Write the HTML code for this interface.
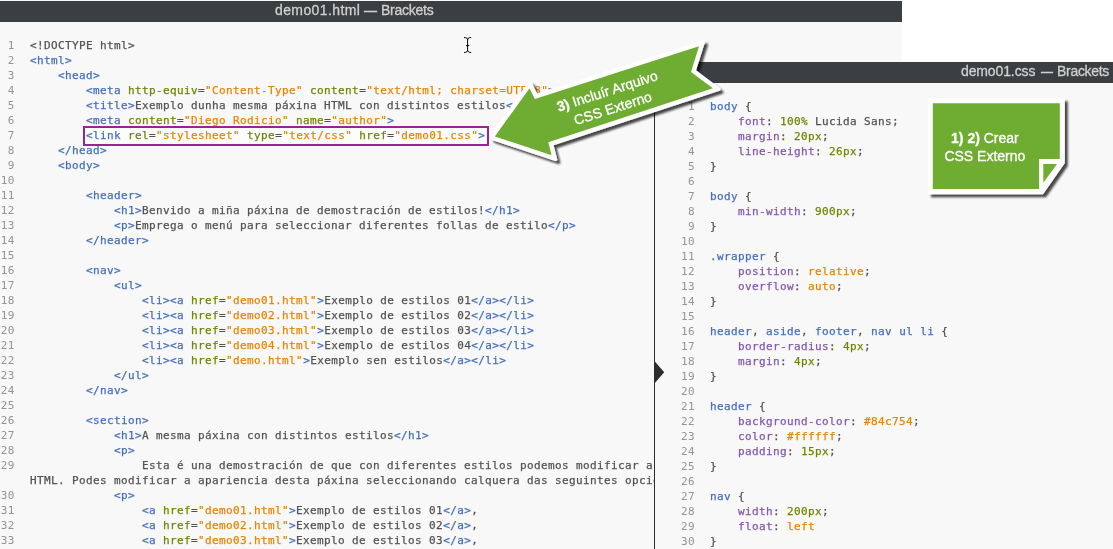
<!DOCTYPE html>
<html lang="gl">
<head>
<meta charset="utf-8">
<title>demo01.html — Brackets</title>
<style>
html,body{margin:0;padding:0;}
body{width:1113px;height:549px;position:relative;overflow:hidden;background:#fff;font-family:"Liberation Sans",sans-serif;}
.win{position:absolute;background:#f8f8f8;overflow:hidden;}
.tb{-webkit-text-stroke:0.3px #d0d0d0;position:absolute;left:0;right:0;background:#3c3f41;color:#d0d0d0;font-family:"Liberation Sans",sans-serif;font-size:14px;white-space:nowrap;}
.code{position:absolute;will-change:transform;-webkit-text-stroke:0.25px;font-family:"DejaVu Sans Mono","Liberation Mono",monospace;font-size:11px;letter-spacing:0.3775px;line-height:15px;color:#535353;}
.ln{height:15px;position:relative;white-space:pre;}
.ln i{-webkit-text-stroke:0;position:absolute;font-style:normal;color:#949494;text-align:right;width:30px;}
#left{left:0;top:0;width:902px;height:549px;}
#left .tb{top:1px;height:21px;}
#left .code{left:29.6px;top:38px;}
#left .ln i{left:-45.3px;}
#right{left:654px;top:62px;width:459px;height:487px;}
#right .tb{top:0;height:21px;}
#right .code{left:56px;top:37px;}
#right .ln i{left:-45px;}
#vline{position:absolute;left:654.1px;top:83px;width:1.15px;height:466px;background:#2b2d2f;}
#box{position:absolute;left:82.9px;top:125.6px;width:401.8px;height:16.8px;border:2px solid #9a2196;background:rgba(255,255,255,.55);box-shadow:0 0 0 1px rgba(255,255,255,.7);}
.t{position:absolute;will-change:transform;}
</style>
</head>
<body>
<div class="win" id="left">
  <div id="box"></div>
  <div class="tb"><span class="t" style="left:275.1px;top:1px;letter-spacing:0.4px;">demo01.html</span><span class="t" style="left:364.4px;top:1px;transform:scaleX(0.93);transform-origin:0 0;">—</span><span class="t" style="left:380.5px;top:1px;letter-spacing:-0.26px;">Brackets</span></div>
  <div class="code">
<div class="ln"><i>1</i>&lt;!DOCTYPE html&gt;</div>
<div class="ln"><i>2</i><span style="color:#446fbd">&lt;html</span><span style="color:#446fbd">&gt;</span></div>
<div class="ln"><i>3</i>    <span style="color:#446fbd">&lt;head</span><span style="color:#446fbd">&gt;</span></div>
<div class="ln"><i>4</i>        <span style="color:#446fbd">&lt;meta</span> <span style="color:#6d8600">http-equiv</span>=<span style="color:#e88501">"Content-Type"</span> <span style="color:#6d8600">content</span>=<span style="color:#e88501">"text/html; charset=UTF-8"</span><span style="color:#446fbd">&gt;</span></div>
<div class="ln"><i>5</i>        <span style="color:#446fbd">&lt;title</span><span style="color:#446fbd">&gt;</span>Exemplo dunha mesma páxina HTML con distintos estilos<span style="color:#446fbd">&lt;/title</span><span style="color:#446fbd">&gt;</span></div>
<div class="ln"><i>6</i>        <span style="color:#446fbd">&lt;meta</span> <span style="color:#6d8600">content</span>=<span style="color:#e88501">"Diego Rodicio"</span> <span style="color:#6d8600">name</span>=<span style="color:#e88501">"author"</span><span style="color:#446fbd">&gt;</span></div>
<div class="ln"><i>7</i>        <span style="color:#446fbd">&lt;link</span> <span style="color:#6d8600">rel</span>=<span style="color:#e88501">"stylesheet"</span> <span style="color:#6d8600">type</span>=<span style="color:#e88501">"text/css"</span> <span style="color:#6d8600">href</span>=<span style="color:#e88501">"demo01.css"</span><span style="color:#446fbd">&gt;</span></div>
<div class="ln"><i>8</i>    <span style="color:#446fbd">&lt;/head</span><span style="color:#446fbd">&gt;</span></div>
<div class="ln"><i>9</i>    <span style="color:#446fbd">&lt;body</span><span style="color:#446fbd">&gt;</span></div>
<div class="ln"><i>10</i></div>
<div class="ln"><i>11</i>        <span style="color:#446fbd">&lt;header</span><span style="color:#446fbd">&gt;</span></div>
<div class="ln"><i>12</i>            <span style="color:#446fbd">&lt;h1</span><span style="color:#446fbd">&gt;</span>Benvido a miña páxina de demostración de estilos!<span style="color:#446fbd">&lt;/h1</span><span style="color:#446fbd">&gt;</span></div>
<div class="ln"><i>13</i>            <span style="color:#446fbd">&lt;p</span><span style="color:#446fbd">&gt;</span>Emprega o menú para seleccionar diferentes follas de estilo<span style="color:#446fbd">&lt;/p</span><span style="color:#446fbd">&gt;</span></div>
<div class="ln"><i>14</i>        <span style="color:#446fbd">&lt;/header</span><span style="color:#446fbd">&gt;</span></div>
<div class="ln"><i>15</i></div>
<div class="ln"><i>16</i>        <span style="color:#446fbd">&lt;nav</span><span style="color:#446fbd">&gt;</span></div>
<div class="ln"><i>17</i>            <span style="color:#446fbd">&lt;ul</span><span style="color:#446fbd">&gt;</span></div>
<div class="ln"><i>18</i>                <span style="color:#446fbd">&lt;li</span><span style="color:#446fbd">&gt;</span><span style="color:#446fbd">&lt;a</span> <span style="color:#6d8600">href</span>=<span style="color:#e88501">"demo01.html"</span><span style="color:#446fbd">&gt;</span>Exemplo de estilos 01<span style="color:#446fbd">&lt;/a</span><span style="color:#446fbd">&gt;</span><span style="color:#446fbd">&lt;/li</span><span style="color:#446fbd">&gt;</span></div>
<div class="ln"><i>19</i>                <span style="color:#446fbd">&lt;li</span><span style="color:#446fbd">&gt;</span><span style="color:#446fbd">&lt;a</span> <span style="color:#6d8600">href</span>=<span style="color:#e88501">"demo02.html"</span><span style="color:#446fbd">&gt;</span>Exemplo de estilos 02<span style="color:#446fbd">&lt;/a</span><span style="color:#446fbd">&gt;</span><span style="color:#446fbd">&lt;/li</span><span style="color:#446fbd">&gt;</span></div>
<div class="ln"><i>20</i>                <span style="color:#446fbd">&lt;li</span><span style="color:#446fbd">&gt;</span><span style="color:#446fbd">&lt;a</span> <span style="color:#6d8600">href</span>=<span style="color:#e88501">"demo03.html"</span><span style="color:#446fbd">&gt;</span>Exemplo de estilos 03<span style="color:#446fbd">&lt;/a</span><span style="color:#446fbd">&gt;</span><span style="color:#446fbd">&lt;/li</span><span style="color:#446fbd">&gt;</span></div>
<div class="ln"><i>21</i>                <span style="color:#446fbd">&lt;li</span><span style="color:#446fbd">&gt;</span><span style="color:#446fbd">&lt;a</span> <span style="color:#6d8600">href</span>=<span style="color:#e88501">"demo04.html"</span><span style="color:#446fbd">&gt;</span>Exemplo de estilos 04<span style="color:#446fbd">&lt;/a</span><span style="color:#446fbd">&gt;</span><span style="color:#446fbd">&lt;/li</span><span style="color:#446fbd">&gt;</span></div>
<div class="ln"><i>22</i>                <span style="color:#446fbd">&lt;li</span><span style="color:#446fbd">&gt;</span><span style="color:#446fbd">&lt;a</span> <span style="color:#6d8600">href</span>=<span style="color:#e88501">"demo.html"</span><span style="color:#446fbd">&gt;</span>Exemplo sen estilos<span style="color:#446fbd">&lt;/a</span><span style="color:#446fbd">&gt;</span><span style="color:#446fbd">&lt;/li</span><span style="color:#446fbd">&gt;</span></div>
<div class="ln"><i>23</i>            <span style="color:#446fbd">&lt;/ul</span><span style="color:#446fbd">&gt;</span></div>
<div class="ln"><i>24</i>        <span style="color:#446fbd">&lt;/nav</span><span style="color:#446fbd">&gt;</span></div>
<div class="ln"><i>25</i></div>
<div class="ln"><i>26</i>        <span style="color:#446fbd">&lt;section</span><span style="color:#446fbd">&gt;</span></div>
<div class="ln"><i>27</i>            <span style="color:#446fbd">&lt;h1</span><span style="color:#446fbd">&gt;</span>A mesma páxina con distintos estilos<span style="color:#446fbd">&lt;/h1</span><span style="color:#446fbd">&gt;</span></div>
<div class="ln"><i>28</i>            <span style="color:#446fbd">&lt;p</span><span style="color:#446fbd">&gt;</span></div>
<div class="ln"><i>29</i>                Esta é una demostración de que con diferentes estilos podemos modificar a aparencia dunha mesma páxina</div>
<div class="ln"><i></i>HTML. Podes modificar a apariencia desta páxina seleccionando calquera das seguintes opcións:</div>
<div class="ln"><i>30</i>            <span style="color:#446fbd">&lt;p</span><span style="color:#446fbd">&gt;</span></div>
<div class="ln"><i>31</i>                <span style="color:#446fbd">&lt;a</span> <span style="color:#6d8600">href</span>=<span style="color:#e88501">"demo01.html"</span><span style="color:#446fbd">&gt;</span>Exemplo de estilos 01<span style="color:#446fbd">&lt;/a</span><span style="color:#446fbd">&gt;</span>,</div>
<div class="ln"><i>32</i>                <span style="color:#446fbd">&lt;a</span> <span style="color:#6d8600">href</span>=<span style="color:#e88501">"demo02.html"</span><span style="color:#446fbd">&gt;</span>Exemplo de estilos 02<span style="color:#446fbd">&lt;/a</span><span style="color:#446fbd">&gt;</span>,</div>
<div class="ln"><i>33</i>                <span style="color:#446fbd">&lt;a</span> <span style="color:#6d8600">href</span>=<span style="color:#e88501">"demo03.html"</span><span style="color:#446fbd">&gt;</span>Exemplo de estilos 03<span style="color:#446fbd">&lt;/a</span><span style="color:#446fbd">&gt;</span>,</div>
  </div>
</div>
<div class="win" id="right">
  <div class="tb"><span class="t" style="left:307.1px;top:1.4px;letter-spacing:-0.12px;">demo01.css</span><span class="t" style="left:386.8px;top:1.4px;transform:scaleX(0.86);transform-origin:0 0;">—</span><span class="t" style="left:402.6px;top:1.4px;letter-spacing:-0.3px;">Brackets</span></div>
  <div class="code">
<div class="ln"><i>1</i><span style="color:#446fbd">body</span> {</div>
<div class="ln"><i>2</i>    <span style="color:#8757ad">font</span>: <span style="color:#6d8600">100%</span> Lucida Sans;</div>
<div class="ln"><i>3</i>    <span style="color:#8757ad">margin</span>: <span style="color:#6d8600">20px</span>;</div>
<div class="ln"><i>4</i>    <span style="color:#8757ad">line-height</span>: <span style="color:#6d8600">26px</span>;</div>
<div class="ln"><i>5</i>}</div>
<div class="ln"><i>6</i></div>
<div class="ln"><i>7</i><span style="color:#446fbd">body</span> {</div>
<div class="ln"><i>8</i>    <span style="color:#8757ad">min-width</span>: <span style="color:#6d8600">900px</span>;</div>
<div class="ln"><i>9</i>}</div>
<div class="ln"><i>10</i></div>
<div class="ln"><i>11</i><span style="color:#446fbd">.wrapper</span> {</div>
<div class="ln"><i>12</i>    <span style="color:#8757ad">position</span>: <span style="color:#e88501">relative</span>;</div>
<div class="ln"><i>13</i>    <span style="color:#8757ad">overflow</span>: <span style="color:#e88501">auto</span>;</div>
<div class="ln"><i>14</i>}</div>
<div class="ln"><i>15</i></div>
<div class="ln"><i>16</i><span style="color:#446fbd">header</span>, <span style="color:#446fbd">aside</span>, <span style="color:#446fbd">footer</span>, <span style="color:#446fbd">nav</span> <span style="color:#446fbd">ul</span> <span style="color:#446fbd">li</span> {</div>
<div class="ln"><i>17</i>    <span style="color:#8757ad">border-radius</span>: <span style="color:#6d8600">4px</span>;</div>
<div class="ln"><i>18</i>    <span style="color:#8757ad">margin</span>: <span style="color:#6d8600">4px</span>;</div>
<div class="ln"><i>19</i>}</div>
<div class="ln"><i>20</i></div>
<div class="ln"><i>21</i><span style="color:#446fbd">header</span> {</div>
<div class="ln"><i>22</i>    <span style="color:#8757ad">background-color</span>: <span style="color:#e88501">#84c754</span>;</div>
<div class="ln"><i>23</i>    <span style="color:#8757ad">color</span>: <span style="color:#e88501">#ffffff</span>;</div>
<div class="ln"><i>24</i>    <span style="color:#8757ad">padding</span>: <span style="color:#6d8600">15px</span>;</div>
<div class="ln"><i>25</i>}</div>
<div class="ln"><i>26</i></div>
<div class="ln"><i>27</i><span style="color:#446fbd">nav</span> {</div>
<div class="ln"><i>28</i>    <span style="color:#8757ad">width</span>: <span style="color:#6d8600">200px</span>;</div>
<div class="ln"><i>29</i>    <span style="color:#8757ad">float</span>: <span style="color:#e88501">left</span></div>
<div class="ln"><i>30</i>}</div>
  </div>
</div>
<div id="vline"></div>
<svg id="ov" width="1113" height="549" viewBox="0 0 1113 549" style="position:absolute;left:0;top:0;">
  <defs>
    <filter id="sh" x="-10%" y="-10%" width="125%" height="125%">
      <feGaussianBlur in="SourceAlpha" stdDeviation="1.3"/>
      <feOffset dx="2.6" dy="2.7"/>
      <feComponentTransfer><feFuncA type="linear" slope="0.72"/></feComponentTransfer>
      <feMerge><feMergeNode/><feMergeNode in="SourceGraphic"/></feMerge>
    </filter>
  </defs>
  <!-- splitter handle -->
  <polygon points="654,360.6 664.2,372.3 654,383.9" fill="#2b2d2f"/>
  <!-- sticky note -->
  <g filter="url(#sh)">
    <polygon points="928,98.2 1064.8,98.2 1064.8,163 1043,194.2 928,194.2" fill="#ffffff"/>
  </g>
  <polygon points="932.8,103.3 1059.8,103.3 1059.8,159.1 1039.1,159.1 1039.1,189 932.8,189" fill="#6fac32"/>
  <polygon points="1043.3,164 1057,164 1043.3,182.7" fill="#6fac32"/>
  <text x="984.9" y="142.8" text-anchor="middle" font-family="Liberation Sans, sans-serif" font-size="14" fill="#ffffff" stroke="#ffffff" stroke-width="0.3"><tspan font-weight="bold">1) 2) </tspan>Crear</text>
  <text x="984.9" y="160.7" text-anchor="middle" font-family="Liberation Sans, sans-serif" font-size="14" fill="#ffffff" stroke="#ffffff" stroke-width="0.3">CSS Externo</text>
  <!-- arrow -->
  <g filter="url(#sh)">
    <polygon points="489.9,136.2 529,81.3 531.1,81.5 537.1,93.6 703.8,40.1 705.1,41.4 696.1,70.3 720.5,88.5 720.2,90.5 553.6,145.2 557.4,160 556,161.3 491.2,139.8" fill="#ffffff"/>
  </g>
  <polygon points="494.8,136.5 529.5,88.2 534.8,99 699,46.3 691,72 712.9,88.3 548.3,142.3 551.6,155.2" fill="#6fac32"/>
  <g transform="translate(609.6,98.6) rotate(-17.8)" font-family="Liberation Sans, sans-serif" font-size="14" fill="#ffffff" stroke="#ffffff" stroke-width="0.3" text-anchor="middle">
    <text x="0" y="-3"><tspan font-weight="bold">3) </tspan>Incluír Arquivo</text>
    <text x="0" y="15">CSS Externo</text>
  </g>
  <!-- I-beam cursor -->
  <g fill="none" stroke-linecap="round">
    <path d="M464.4 37.6H465.4Q467.2 37.6 467.6 39.7Q468 37.6 469.8 37.6H470.8M467.6 39.5V50.4M464.4 52.4H465.4Q467.2 52.4 467.6 50.3Q468 52.4 469.8 52.4H470.8M466.4 45.6H468.8" stroke="#ffffff" stroke-width="2.6"/>
    <path d="M464.4 37.6H465.4Q467.2 37.6 467.6 39.7Q468 37.6 469.8 37.6H470.8M467.6 39.5V50.4M464.4 52.4H465.4Q467.2 52.4 467.6 50.3Q468 52.4 469.8 52.4H470.8M466.4 45.6H468.8" stroke="#000000" stroke-width="1"/>
  </g>
</svg>
</body>
</html>
